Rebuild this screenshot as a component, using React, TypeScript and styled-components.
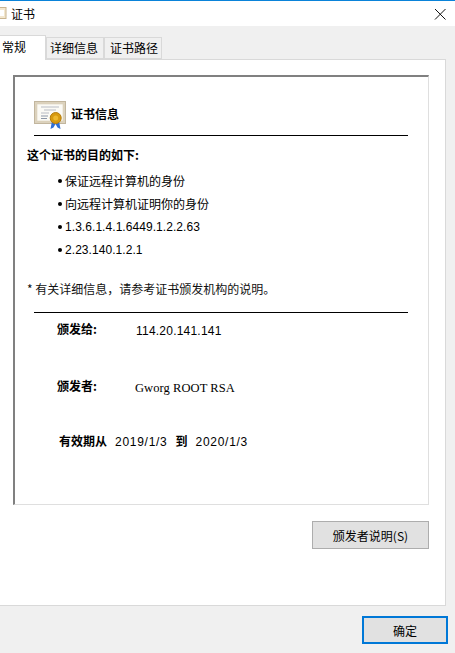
import React from "react";
import styled, { createGlobalStyle } from "styled-components";

const cjk = `"Noto Sans CJK SC", "Liberation Sans", sans-serif`;

const Global = createGlobalStyle`
  html, body { margin: 0; padding: 0; background: #f0f0f0; }
  body { font-family: ${cjk}; font-size: 12px; color: #000; }
  * { box-sizing: border-box; }
`;

const Dialog = styled.div`
  width: 455px; height: 653px; display: flex; flex-direction: column;
  background: #f0f0f0; overflow: hidden;
`;
const TitleBar = styled.header`
  height: 26px; flex: none; display: flex; align-items: center; background: #fff;
  border-top: 1px solid #0a83d9; padding-right: 6px;
`;
const TitleIcon = styled.svg`
  width: 7px; height: 13px; flex: none; margin-right: 4px;
`;
const TitleText = styled.span`
  flex: 1; font-size: 12px; line-height: 24px;
`;
const CloseIcon = styled.svg`
  width: 16px; height: 16px; flex: none; margin-right: 1px;
`;
const Tabs = styled.nav`
  height: 33px; flex: none; display: flex; align-items: flex-end; position: relative; z-index: 1;
`;
const Tab = styled.div<{ $active?: boolean; $w: number; $pad: number }>`
  width: ${(p) => p.$w}px;
  height: ${(p) => (p.$active ? 25 : 22)}px;
  margin-bottom: ${(p) => (p.$active ? -1 : 0)}px;
  border: 1px solid #d9d9d9;
  border-left-width: ${(p) => (p.$active ? 0 : 1)}px;
  border-bottom-width: ${(p) => (p.$active ? 0 : 1)}px;
  background: ${(p) => (p.$active ? "#fff" : "#f0f0f0")};
  padding-left: ${(p) => p.$pad}px;
  line-height: ${(p) => (p.$active ? 21 : 20)}px;
  font-size: 12px;
  white-space: nowrap;
`;
const Page = styled.main`
  width: 446px; height: 547px; flex: none; background: #fff;
  border: 1px solid #d9d9d9; border-left: 0;
  padding: 15px 16px 0 13px;
`;
const InfoBox = styled.section`
  height: 430px; border: 1px solid #dfdfdf; border-left: 2px solid #808080; border-top: 2px solid #808080;
  padding: 24px 20px 0 19px;
`;
const Heading = styled.div`
  height: 34px; display: flex; align-items: flex-start; gap: 5px; font-weight: 700; font-size: 12px; line-height: 26px;
`;
const CertIcon = styled.svg`
  width: 32px; height: 28px; flex: none;
`;
const Rule = styled.hr`
  border: 0; border-top: 1px solid #000; margin: 0; height: 0;
`;
const Purpose = styled.div`
  margin: 10px 0 0 -7px; font-weight: 700; line-height: 18px;
`;
const List = styled.ul`
  list-style: none; margin: 5px 0 0; padding: 0 0 0 24px;
`;
const Item = styled.li`
  display: flex; align-items: center; height: 23px; gap: 3px;
  &::before { content: ""; width: 4px; height: 4px; border-radius: 50%; background: #000; flex: none; }
`;
const LatinItem = styled.span`
  font-family: "Liberation Sans", sans-serif; letter-spacing: 0.06px;
`;
const Note = styled.div`
  margin: 19px 0 14px -7px; line-height: 18px; color: #111;
`;
const FieldRow = styled.div<{ $top: number }>`
  display: flex; align-items: flex-start; height: 18px; line-height: 18px; margin-top: ${(p) => p.$top}px; padding-left: 23px;
`;
const FieldLabel = styled.b`
  width: 79px; flex: none; font-weight: 700; line-height: 14px;
`;
const FieldValue = styled.span`
  font-family: "Liberation Sans", sans-serif; font-size: 12px; letter-spacing: 0.22px;
`;
const SerifValue = styled.span`
  font-family: "Liberation Serif", serif; font-size: 12.5px; margin-left: -1px; letter-spacing: 0.07px;
`;
const Validity = styled.div`
  display: flex; align-items: flex-start; height: 18px; line-height: 18px; margin-top: 36px; padding-left: 25px;
`;
const ValidLabel = styled.b<{ $gap: number }>`
  font-weight: 700; line-height: 16px; margin-right: ${(p) => p.$gap}px;
`;
const ValidDate = styled.span<{ $gap: number }>`
  font-family: "Liberation Sans", sans-serif; letter-spacing: 0.72px;
  margin-right: ${(p) => p.$gap}px;
`;
const PageActions = styled.div`
  display: flex; justify-content: flex-end; margin-top: 16px;
`;
const WinButton = styled.button<{ $primary?: boolean; $w: number }>`
  width: ${(p) => p.$w}px; height: 28px; padding: 0; background: #e1e1e1;
  border: ${(p) => (p.$primary ? "2px solid #0078d7" : "1px solid #adadad")};
  font: 12px ${cjk}; color: #000;
`;
const Footer = styled.footer`
  flex: 1; display: flex; justify-content: flex-end; padding: 10px 7px 0 0;
`;

export default function App() {
  return (
    <Dialog>
      <Global />
      <TitleBar>
        <TitleIcon viewBox="0 0 7 13">
          <rect x="-6" y="0.5" width="12" height="11" fill="#f3e7cf" stroke="#c9b48f" />
          <rect x="-4" y="3" width="8" height="6" fill="#fff" />
        </TitleIcon>
        <TitleText>证书</TitleText>
        <CloseIcon viewBox="0 0 16 16">
          <path d="M3 3L13.5 13.5M13.5 3L3 13.5" stroke="#111" strokeWidth="1" fill="none" />
        </CloseIcon>
      </TitleBar>
      <Tabs>
        <Tab $active $w={46} $pad={2}>常规</Tab>
        <Tab $w={58} $pad={3}>详细信息</Tab>
        <Tab $w={58} $pad={5}>证书路径</Tab>
      </Tabs>
      <Page>
        <InfoBox>
          <Heading>
            <CertIcon viewBox="0 0 32 28">
              <rect x="0.5" y="0.5" width="31" height="22" fill="#dcd2bd" stroke="#c2b69e" />
              <rect x="3" y="3" width="26" height="17" fill="#fbfaf5" stroke="#d9cfb9" strokeWidth="0.6" />
              <path d="M7 6H25M10 9H22M7 12H15" stroke="#b9bcc4" strokeWidth="1" />
              <path d="M7 15H14M7 17.5H13" stroke="#8d97a8" strokeWidth="1" />
              <path d="M18 20L16.5 28L19.5 26.5L21.5 23Z M25 20L26.5 28L23.5 26.5L21.5 23Z" fill="#2f6fd6" />
              <circle cx="21.7" cy="17" r="5.5" fill="#d79a10" stroke="#b57c0a" />
              <circle cx="21.7" cy="17" r="2.5" fill="#eeb92e" />
            </CertIcon>
            证书信息
          </Heading>
          <Rule />
          <Purpose>这个证书的目的如下:</Purpose>
          <List>
            <Item>保证远程计算机的身份</Item>
            <Item>向远程计算机证明你的身份</Item>
            <Item><LatinItem>1.3.6.1.4.1.6449.1.2.2.63</LatinItem></Item>
            <Item><LatinItem>2.23.140.1.2.1</LatinItem></Item>
          </List>
          <Note>* 有关详细信息，请参考证书颁发机构的说明。</Note>
          <Rule />
          <FieldRow $top={9}>
            <FieldLabel>颁发给:</FieldLabel>
            <FieldValue>114.20.141.141</FieldValue>
          </FieldRow>
          <FieldRow $top={39}>
            <FieldLabel>颁发者:</FieldLabel>
            <SerifValue>Gworg ROOT RSA</SerifValue>
          </FieldRow>
          <Validity>
            <ValidLabel $gap={8}>有效期从</ValidLabel>
            <ValidDate $gap={8}>2019/1/3</ValidDate>
            <ValidLabel $gap={8}>到</ValidLabel>
            <ValidDate $gap={0}>2020/1/3</ValidDate>
          </Validity>
        </InfoBox>
        <PageActions>
          <WinButton $w={117}>颁发者说明(S)</WinButton>
        </PageActions>
      </Page>
      <Footer>
        <WinButton $primary $w={86}>确定</WinButton>
      </Footer>
    </Dialog>
  );
}
